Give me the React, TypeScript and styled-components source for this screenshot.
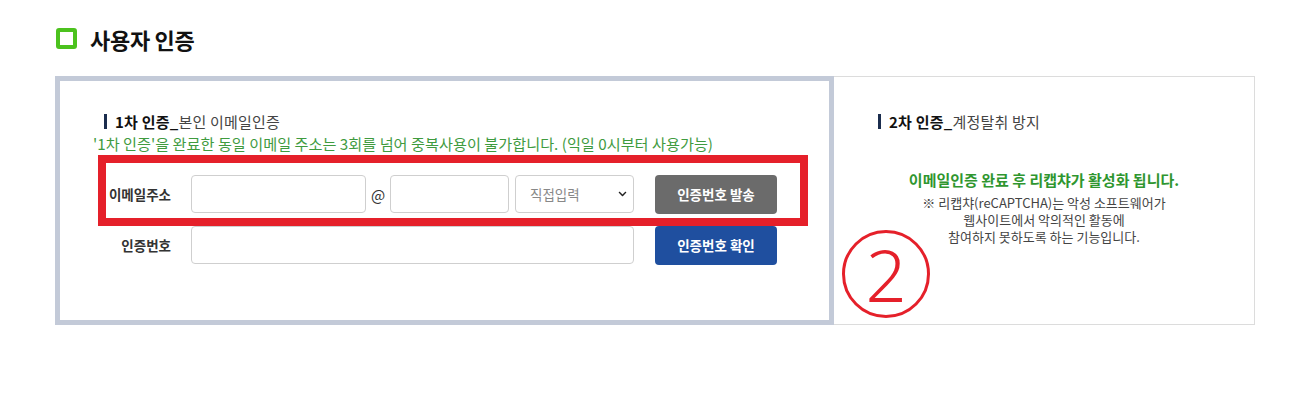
import React from 'react';
import styled, { createGlobalStyle } from 'styled-components';
import { FaChevronDown } from 'react-icons/fa';

const GlobalStyle = createGlobalStyle`
  * {
    box-sizing: border-box;
  }
  body {
    margin: 0;
    background: #fff;
    color: #333;
    font-family: 'Noto Sans CJK KR', 'Noto Sans', sans-serif;
  }
`;

const App = (): JSX.Element => {
  return (
    <Page>
      <GlobalStyle />
      <Heading>
        <GreenSquare />
        사용자 인증
      </Heading>

      <Board>
        <FirstStep>
          <StepTitle $indent={11}>
            <Bar />
            <strong>1차 인증_</strong>본인 이메일인증
          </StepTitle>
          <Notice>
            '1차 인증'을 완료한 동일 이메일 주소는 3회를 넘어 중복사용이 불가합니다. (익일 0시부터 사용가능)
          </Notice>

          <Form>
            <Row>
              <Label>이메일주소</Label>
              <Fields>
                <Input $width={175} type="text" />
                <At>@</At>
                <Input $width={119} type="text" />
                <SelectWrap>
                  <Select defaultValue="">
                    <option value="">직접입력</option>
                    <option value="naver.com">naver.com</option>
                    <option value="gmail.com">gmail.com</option>
                  </Select>
                  <Chevron>
                    <FaChevronDown />
                  </Chevron>
                </SelectWrap>
              </Fields>
              <Button type="button" $tone="gray">
                인증번호 발송
              </Button>
            </Row>
            <Row>
              <Label>인증번호</Label>
              <Fields>
                <Input $width={443} type="text" />
              </Fields>
              <Button type="button" $tone="blue">
                인증번호 확인
              </Button>
            </Row>
          </Form>

          <RedFrame />
        </FirstStep>

        <SecondStep>
          <StepTitle $indent={44}>
            <Bar />
            <strong>2차 인증_</strong>계정탈취 방지
          </StepTitle>
          <CaptchaInfo>
            <CaptchaNotice>이메일인증 완료 후 리캡챠가 활성화 됩니다.</CaptchaNotice>
            <CaptchaDesc>
              ※ 리캡챠(reCAPTCHA)는 악성 소프트웨어가
              <br />
              웹사이트에서 악의적인 활동에
              <br />
              참여하지 못하도록 하는 기능입니다.
            </CaptchaDesc>
          </CaptchaInfo>
          <StepMark>2</StepMark>
        </SecondStep>
      </Board>
    </Page>
  );
};

const Page = styled.div`
  padding: 28px 40px 0 55px;
`;

const Heading = styled.h2`
  display: flex;
  align-items: center;
  gap: 13px;
  height: 21px;
  margin: 0 0 27px 1px;
  font-size: 22px;
  font-weight: 700;
  color: #111;
  letter-spacing: -0.3px;
`;

const GreenSquare = styled.span`
  display: block;
  width: 21px;
  height: 21px;
  border: 4px solid #4cc21e;
  border-radius: 3px;
`;

const Board = styled.div`
  display: flex;
  width: 1200px;
  height: 249px;
`;

const FirstStep = styled.section`
  position: relative;
  width: 779px;
  border: 5px solid #c3cad8;
  padding: 30px 0 0 33px;
`;

const SecondStep = styled.section`
  position: relative;
  flex: 1;
  border: 1px solid #dcdcdc;
  border-left: none;
  padding-top: 34px;
`;

const StepTitle = styled.h3<{ $indent: number }>`
  display: flex;
  align-items: center;
  height: 20px;
  margin: 0 0 0 ${(p) => p.$indent}px;
  font-size: 15px;
  font-weight: 400;
  color: #444;
  letter-spacing: 0.2px;
  strong {
    font-weight: 700;
    color: #111;
  }
`;

const Bar = styled.span`
  display: block;
  width: 3px;
  height: 15px;
  margin-right: 8px;
  background: #1b2d4e;
`;

const Notice = styled.p`
  margin: 2px 0 0;
  font-size: 15.2px;
  line-height: 20px;
  color: #3f9b3f;
`;

const Form = styled.div`
  display: flex;
  flex-direction: column;
  gap: 13px;
  margin-top: 22px;
  margin-left: -2px;
`;

const Row = styled.div`
  display: flex;
  align-items: center;
  height: 38px;
`;

const Label = styled.span`
  width: 80px;
  margin-right: 20px;
  text-align: right;
  font-size: 13.5px;
  font-weight: 700;
  color: #333;
`;

const Fields = styled.div`
  display: flex;
  align-items: center;
  width: 443px;
  height: 100%;
  margin-right: 21px;
`;

const Input = styled.input<{ $width: number }>`
  width: ${(p) => p.$width}px;
  height: 38px;
  padding: 0 10px;
  border: 1px solid #cfcfcf;
  border-radius: 4px;
  background: #fff;
  font-family: inherit;
  font-size: 13px;
  outline: none;
`;

const At = styled.span`
  width: 24px;
  text-align: center;
  font-size: 15px;
  color: #333;
`;

const SelectWrap = styled.div`
  position: relative;
  width: 119px;
  height: 38px;
  margin-left: 6px;
`;

const Select = styled.select`
  width: 100%;
  height: 100%;
  padding: 0 24px 0 14px;
  border: 1px solid #cfcfcf;
  border-radius: 4px;
  background: #fff;
  appearance: none;
  font-family: inherit;
  font-size: 13.5px;
  color: #888;
  outline: none;
`;

const Chevron = styled.span`
  position: absolute;
  top: 50%;
  right: 7px;
  display: flex;
  transform: translateY(-50%);
  font-size: 9px;
  color: #222;
  pointer-events: none;
`;

const Button = styled.button<{ $tone: 'gray' | 'blue' }>`
  width: 122px;
  height: 39px;
  border: none;
  border-radius: 4px;
  background: ${(p) => (p.$tone === 'gray' ? '#6b6b6b' : '#1f4f9f')};
  color: #fff;
  font-family: inherit;
  font-size: 13.5px;
  font-weight: 700;
  cursor: pointer;
`;

const RedFrame = styled.div`
  position: absolute;
  left: 38px;
  top: 74px;
  width: 710px;
  height: 71px;
  border: 8px solid #e5202a;
  pointer-events: none;
`;

const CaptchaInfo = styled.div`
  margin-top: 39px;
  text-align: center;
`;

const CaptchaNotice = styled.p`
  margin: 0;
  font-size: 15px;
  font-weight: 700;
  line-height: 20px;
  color: #2f962f;
`;

const CaptchaDesc = styled.p`
  margin: 4px 0 0;
  font-size: 13px;
  line-height: 17px;
  color: #444;
`;

const StepMark = styled.span`
  position: absolute;
  left: 8px;
  top: 153px;
  display: flex;
  align-items: center;
  justify-content: center;
  width: 88px;
  height: 88px;
  border: 3px solid #e5202a;
  border-radius: 50%;
  font-family: 'Noto Sans', sans-serif;
  font-size: 72px;
  font-weight: 300;
  line-height: 1;
  color: #e5202a;
`;

export default App;
